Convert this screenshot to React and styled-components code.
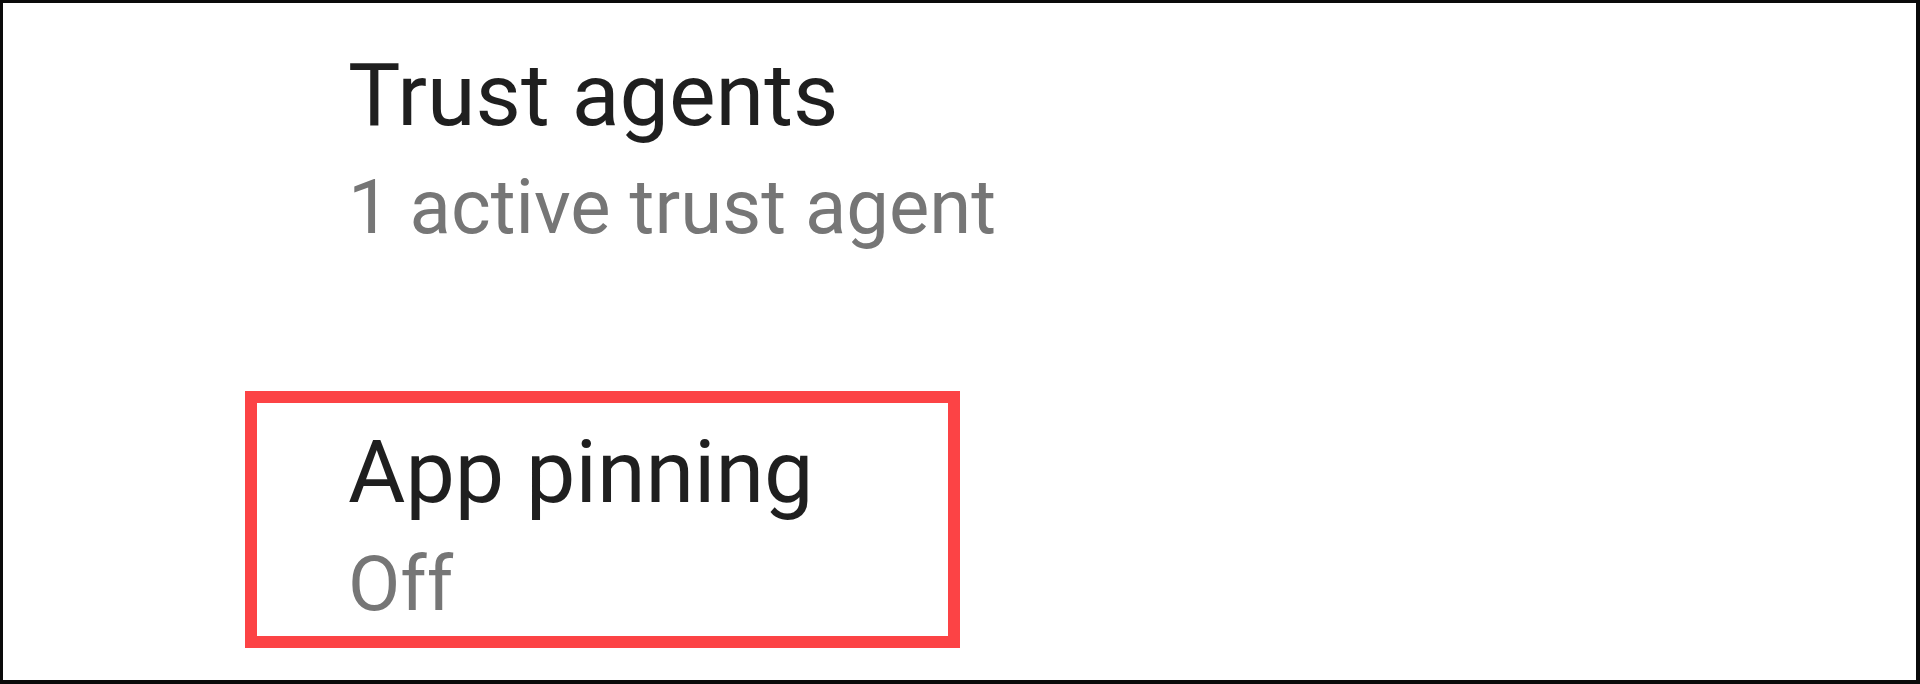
import React from "react";
import styled, { createGlobalStyle } from "styled-components";

const GlobalStyle = createGlobalStyle`
  html, body {
    margin: 0;
    padding: 0;
    background: #ffffff;
  }
  body {
    font-family: Roboto, "Noto Sans", "Liberation Sans", sans-serif;
  }
  * { box-sizing: border-box; }
`;

const Frame = styled.div`
  width: 1920px;
  height: 684px;
  background: #ffffff;
  border-style: solid;
  border-color: #0a0a0a;
  border-width: 3px 4px 4px 3px;
  display: flex;
  flex-direction: column;
  padding-top: 40px;
  overflow: hidden;
`;

const Item = styled.div`
  display: flex;
  flex-direction: column;
  gap: 14px;
  margin-left: ${(p) => (p.$highlighted ? "242px" : "0")};
  width: ${(p) => (p.$highlighted ? "715px" : "auto")};
  padding: ${(p) => (p.$highlighted ? "17px 0 6px 91px" : "0 0 0 345px")};
  border: ${(p) => (p.$highlighted ? "12px solid #fc4345" : "none")};
  margin-top: ${(p) => p.$offset || 0}px;
`;

const Title = styled.div`
  font-size: 88px;
  line-height: 104px;
  font-weight: 400;
  color: #1f1f1f;
  white-space: nowrap;
`;

const Summary = styled.div`
  font-size: 76px;
  line-height: 92px;
  font-weight: 400;
  color: #767676;
  white-space: nowrap;
`;

const items = [
  { title: "Trust agents", summary: "1 active trust agent" },
  { title: "App pinning", summary: "Off", highlighted: true, offset: 138 },
];

export default function App() {
  return (
    <>
      <GlobalStyle />
      <Frame>
        {items.map((it) => (
          <Item key={it.title} $highlighted={it.highlighted} $offset={it.offset}>
            <Title>{it.title}</Title>
            <Summary>{it.summary}</Summary>
          </Item>
        ))}
      </Frame>
    </>
  );
}
